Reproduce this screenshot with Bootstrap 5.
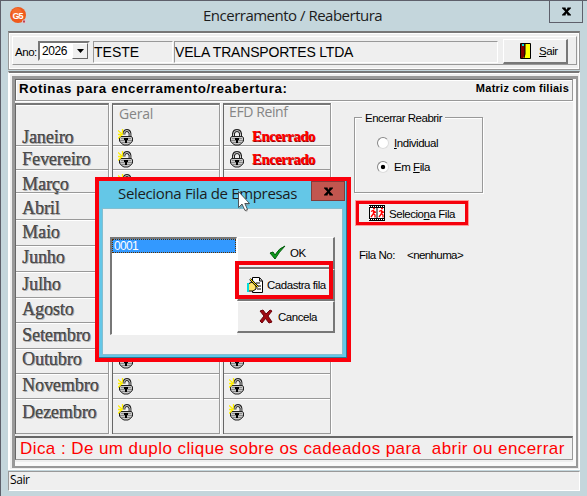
<!DOCTYPE html>
<html lang="pt-BR">
<head>
<meta charset="utf-8">
<title>Encerramento / Reabertura</title>
<link href="https://cdn.jsdelivr.net/npm/bootstrap@5.3.0/dist/css/bootstrap.min.css" rel="stylesheet">
<style>
body{width:587px;height:496px;overflow:hidden;font:12px/14px "Liberation Sans",Arial,sans-serif;color:#000;background:#c4d6dc}
.win{width:587px;height:496px;border-top:1px solid #5e606b;border-left:1px solid #5e606b;padding:0 7px}
.titlebar{height:30px;font:15px/29px "Open Sans","Noto Sans",sans-serif;color:#1c1c1c}
.logo{width:17px;height:17px;margin:6px 0 0 2px}
.title-text{width:180px;margin-left:176px;white-space:nowrap;letter-spacing:-.5px}
.win-close{width:34px;height:22px;border:1px solid #5e606b;border-top:0;margin-right:-3px}
.main-w{width:572px}
.tools{height:39px;border:1px solid #999;border-top:2px solid #777;box-shadow:inset 1px 1px #fff,inset -1px -1px #fff;background:#efefef;padding:3px 2px 2px 3px}
.tools-in{height:29px;border:1px solid #fff;border-right-color:#999;border-bottom-color:#999;padding-top:4px}
.sunk{border:1px solid #999;border-right-color:#fff;border-bottom-color:#fff}
.ano{margin:4px 3px 0 2px;width:20px}
.year{width:52px;height:20px;border:2px solid #777;border-color:#777 #eee #eee #777;background:#fff;font-size:12px;line-height:17px;padding-left:2px;letter-spacing:-.4px}
.year-arrow{width:16px;height:16px;background:#efefef;border:1px solid #fff;border-right:1px solid #666;border-bottom:1px solid #666}
.fld{height:22px;font-size:14px;line-height:21px;white-space:nowrap;letter-spacing:-.18px}
.f1{width:80px;margin-left:3px;letter-spacing:0}
.f2{width:324px;margin-left:1px}
.pushbtn{background:#efefef;border:1px solid #fff;border-right:2px solid #777;border-bottom:2px solid #777}
.sair{width:65px;height:25px;margin:-2px 0 0 5px}
.sheet{height:399px;margin-top:1px;background:#efefef;border:1px solid #fff;border-top:2px solid #777;box-shadow:inset 1px 1px #fff;padding:3px}
.sheet-in{height:392px;border:3px solid #999;border-right-width:2px;border-bottom-width:2px;padding:0 3px 0 0;margin-right:-2px;box-shadow:inset -3px -4px #fafafa}
.head{height:22px;border:1px solid #666;border-right-color:#999;border-bottom-color:#999;font-weight:700;padding:0 3px;box-shadow:inset 1px 1px #fff}
.head-l{font-size:13.3px;letter-spacing:.61px;line-height:17px}
.head-r{font-size:11px;letter-spacing:.25px;line-height:17px}
.work{height:335px;border-top:1px solid #fff;padding-top:1px}
.mcol{width:94px;height:331px;margin-right:3px;border:1px solid #666;border-top:2px solid #777;border-right-color:#999;border-bottom:0;box-shadow:1px 0 #fff}
.gcol{width:108px}
.cell{border-bottom:1px solid #999;border-top:1px solid #fff}
.c1{height:41px}.c2{height:24px}.c3{height:23px}.c4{height:27px}.c5,.c6,.c7{height:26px}.c8,.c9,.c11,.c10{height:25px}.c9{height:26px}.c12{height:35px}
.mth{font:18.1px/18px "Liberation Serif",serif;color:#4c4c4c;text-shadow:1px 1px 0 #aaa,.5px 0 0 #222;padding-left:6px;letter-spacing:-.1px}
.c1.mth{padding-top:22px}.c2.mth{padding-top:3px}.c3.mth{padding-top:4px}.c4.mth{padding-top:5px}.c5.mth,.c9.mth{padding-top:2px}.c6.mth,.c8.mth{padding-top:1px}.c7.mth{padding-top:2px}.c10.mth{padding-top:0}.c11.mth{padding-top:1px}.c12.mth{padding-top:3px}
.lk{width:16px;height:17px;display:block;margin-left:5px;margin-top:3px;flex:none}
.c12 .lk{margin-top:4px}
.c2 .lk{margin-top:4px}
.c10 .lk{margin-top:2px}
.colname{font:14px/15px "Open Sans","Noto Sans",sans-serif;color:#858585;height:20px;padding-left:6px;white-space:nowrap;letter-spacing:-.2px}
.efd{letter-spacing:-.4px;padding-left:5px;line-height:12px}
.enc{font:bold 15px/16px "Liberation Serif",serif;letter-spacing:-.6px;color:#f00;text-shadow:.6px .6px 0 #a00000;margin:2px 0 0 7px}
.c2 .enc{margin-top:4px}
.side{padding:14px 0 0 20px;width:225px}
.group{width:129px;height:76px;border:1px solid #999;box-shadow:1px 1px #fff,inset 1px 1px #fff}
.group-name{position:relative;top:-7px;background:#efefef;display:inline-block;margin:0 0 0 7px;padding:0 3px;letter-spacing:-.5px;font-size:11.5px;white-space:nowrap;height:15px}
.radio{width:12px;height:12px;border-radius:50%;border:1px solid #888;border-right-color:#ddd;border-bottom-color:#ddd;background:#fff;margin-right:5px}
.radio.on{background:radial-gradient(circle,#000 0 1.8px,#fff 2.6px)}
.opt1{margin:3px 0 0 22px}.opt2{margin:10px 0 0 22px}
.small-t{font-size:11.5px;letter-spacing:-.45px;white-space:nowrap}
.selbtn{width:114px;height:26px;border:4px solid #f5000b;outline:1px solid #ff9a9a;outline-offset:-1px;margin:7px 0 0 1px;padding-left:10px}
.seltxt{margin-left:4px;padding-top:2px}.fila{margin:22px 0 0 5px}.nenhuma{margin-left:12px;letter-spacing:-.6px}
.tip{height:24px;border:1px solid #999;border-top:2px solid #666;border-left-color:#666;font-size:17px;line-height:22px;color:#f00;white-space:pre;padding-left:4px;letter-spacing:.43px}
.status{height:20px;margin-top:1px;background:#efefef;border:1px solid #fff;border-top-color:#999;border-left-color:#999;font:12px/15px "Open Sans","Noto Sans",sans-serif;padding-left:1px;letter-spacing:-.4px}
.dlg{position:absolute;left:95px;top:177px;width:256px;height:185px;border:4px solid #fb000c;background:#64c7e7;box-shadow:inset -1px -1px #2c7890}
.dlg-title{height:27px;font:15px/25px "Open Sans","Noto Sans",sans-serif;letter-spacing:-.34px;padding-left:19px;white-space:nowrap;color:#1c1c1c}
.dlg-close{width:34px;height:20px;background:#c2564f;border:1px solid #803c3c;margin-right:2px}
.dlg-body{width:241px;height:147px;margin-left:3px;background:#efefef;padding:28px 0 0 7px;border:1px solid #83bfd1}
.list{width:127px;height:98px;border:2px solid #777;border-right:1px solid #fff;border-bottom:1px solid #fff;background:#fff}
.list-item{height:14px;background:#3399ff;color:#fff;border:1px dotted #593000;line-height:12px;padding-left:1px;font-size:12px;letter-spacing:-.7px}
.dbtn{width:98px;height:32px}
.d1{margin:0 4px 0 31px}.d2{margin:0 3px 0 9px}.d3{margin:0 5px 0 21px}
.ring{position:absolute;left:235px;top:261px;width:98px;height:38px;border:4px solid #f5000b}
.cursor{position:absolute;left:237px;top:190px}
</style>
</head>
<body>
<svg width="0" height="0" class="position-absolute">
<symbol id="lock" viewBox="0 0 16 17"><path d="M4.500 8V4.500Q5 1.500 8 1.500T11.500 4.500V8" fill="none" stroke="#222" stroke-width="3"/><path d="M4.500 8V4.500Q5 1.500 8 1.500T11.500 4.500V8" fill="none" stroke="#ccc"/><path d="M2.500 7.500H13.500L14.500 9V12L12.500 14.500L10 16H6L3.500 14.500L1.500 12V9Z" fill="#c8c8c8" stroke="#222"/><path d="M3 9.500H13M2 11.500H14M3 13.500H13" stroke="#888"/><path d="M6 9H10V11H9V14H7V11H6Z" fill="#000"/></symbol>
<symbol id="open" viewBox="0 0 16 17"><path d="M6 5.500V4Q6.500 1.500 9 1.500T12 4.500V8" fill="none" stroke="#222" stroke-width="2.800"/><path d="M6 5.500V4Q6.500 1.500 9 1.500T12 4.500V8" fill="none" stroke="#ccc"/><path d="M2.500 7.500H13.500L14.500 9V12L12.500 14.500L10 16H6L3.500 14.500L1.500 12V9Z" fill="#c8c8c8" stroke="#222"/><path d="M3 9.500H13M2 11.500H14M3 13.500H13" stroke="#888"/><path d="M6 9H10V11H9V14H7V11H6Z" fill="#000"/><path d="M0 1.500L5 6M4.500 0V4M0 5.500H5M0 9.500L3.500 6" stroke="#ffef00" stroke-width="1.300"/></symbol>
<symbol id="ex" viewBox="0 0 10 9"><path d="M0 0H4V1L5 2.500L6 1V0H10V1L6.500 4.500L10 8V9H6V8L5 6.500L4 8V9H0V8L3.500 4.500L0 1Z" fill="#000"/></symbol>
</svg>
<div class="win">
 <div class="titlebar d-flex">
  <svg class="logo" viewBox="0 0 17 17"><circle cx="8" cy="8" r="8" fill="#ef5a1c"/><circle cx="7" cy="6" r="5" fill="#f77a3c" opacity=".6"/><text x="2.500" y="11.500" font-family="Liberation Sans" font-weight="700" font-size="9" textLength="11" fill="#fff">G5</text><circle cx="14" cy="14.500" r="2" fill="#e3c6cf"/><rect x="13" y="13.500" width="2" height="2" fill="#b45"/></svg>
  <div class="title-text">Encerramento / Reabertura</div>
  <div class="win-close ms-auto d-flex align-items-center justify-content-center"><svg width="9" height="9"><use href="#ex"/></svg></div>
 </div>
 <div class="main-w">
  <div class="tools"><div class="tools-in d-flex">
   <span class="small-t ano">Ano:</span>
   <div class="year d-flex justify-content-between"><span>2026</span><span class="year-arrow d-flex align-items-center justify-content-center"><svg width="7" height="4"><path d="M0 0H7L3.500 4Z"/></svg></span></div>
   <div class="fld sunk f1">TESTE</div><div class="fld sunk f2">VELA TRANSPORTES LTDA</div>
   <div class="pushbtn sair d-flex align-items-center"><svg width="11" height="16" class="ms-3"><path d="M.5.500H10.500V15.500H.5Z" fill="#ff0" stroke="#000"/><path d="M1 1H5V12L3 15H1Z" fill="#800000"/><path d="M2 1H4V3H2Z" fill="#0dd"/><path d="M5 1V11L4 15" fill="none" stroke="#000"/></svg><span class="small-t ms-1 ps-1"><u>S</u>air</span></div>
  </div></div>
  <div class="sheet"><div class="sheet-in">
   <div class="head d-flex justify-content-between"><span class="head-l">Rotinas para encerramento/reabertura:</span><span class="head-r">Matriz com filiais</span></div>
   <div class="work d-flex">
    <div class="mcol">
     <div class="cell mth c1">Janeiro</div><div class="cell mth c2">Fevereiro</div><div class="cell mth c3">Março</div><div class="cell mth c4">Abril</div><div class="cell mth c5">Maio</div><div class="cell mth c6">Junho</div><div class="cell mth c7">Julho</div><div class="cell mth c8">Agosto</div><div class="cell mth c9">Setembro</div><div class="cell mth c10">Outubro</div><div class="cell mth c11">Novembro</div><div class="cell mth c12">Dezembro</div>
    </div>
    <div class="mcol gcol">
     <div class="cell c1"><div class="colname">Geral</div><svg class="lk"><use href="#open"/></svg></div>
     <div class="cell c2"><svg class="lk"><use href="#open"/></svg></div>
     <div class="cell c3"><svg class="lk"><use href="#open"/></svg></div>
     <div class="cell c4"></div><div class="cell c5"></div><div class="cell c6"></div><div class="cell c7"></div><div class="cell c8"></div><div class="cell c9"></div>
     <div class="cell c10"><svg class="lk"><use href="#open"/></svg></div>
     <div class="cell c11"><svg class="lk"><use href="#open"/></svg></div>
     <div class="cell c12"><svg class="lk"><use href="#open"/></svg></div>
    </div>
    <div class="mcol gcol">
     <div class="cell c1"><div class="colname efd">EFD Reinf</div><div class="d-flex"><svg class="lk"><use href="#lock"/></svg><span class="enc">Encerrado</span></div></div>
     <div class="cell c2 d-flex"><svg class="lk"><use href="#lock"/></svg><span class="enc">Encerrado</span></div>
     <div class="cell c3"></div><div class="cell c4"></div><div class="cell c5"></div><div class="cell c6"></div><div class="cell c7"></div><div class="cell c8"></div><div class="cell c9"></div>
     <div class="cell c10"><svg class="lk"><use href="#open"/></svg></div>
     <div class="cell c11"><svg class="lk"><use href="#open"/></svg></div>
     <div class="cell c12"><svg class="lk"><use href="#open"/></svg></div>
    </div>
    <div class="side">
     <div class="group"><div class="group-name">Encerrar Reabrir</div>
      <div class="d-flex align-items-center opt1"><span class="radio"></span><span class="small-t"><u>I</u>ndividual</span></div>
      <div class="d-flex align-items-center opt2"><span class="radio on"></span><span class="small-t">Em <u>F</u>ila</span></div>
     </div>
     <div class="selbtn d-flex align-items-center"><svg width="16" height="16"><path d="M0 0H16V16H0Z"/><path d="M1 3H7.500V13H1ZM8.500 3H15V13H8.500Z" fill="#fff"/><path d="M0 1.500H16M0 14.500H16" stroke="#fff" stroke-dasharray="1 1"/><path id="run" d="M4 3.500h2M4.500 5v4M2 6.500l2-1l3 2M4.500 8.500L2 12M4.500 8.500L6 10V12.500" stroke="#f00" stroke-width="1.300" fill="none"/><use href="#run" x="8"/></svg><span class="small-t seltxt">Selecio<u>n</u>a Fila</span></div>
     <div class="fila small-t"><span>Fila No:</span><span class="nenhuma">&lt;nenhuma&gt;</span></div>
    </div>
   </div>
   <div class="tip">Dica : De um duplo clique sobre os cadeados para  abrir ou encerrar</div>
  </div></div>
  <div class="status">Sair</div>
 </div>
</div>
<div class="dlg">
 <div class="dlg-title d-flex justify-content-between"><span>Seleciona Fila de Empresas</span><span class="dlg-close d-flex align-items-center justify-content-center"><svg width="9" height="9"><use href="#ex"/></svg></span></div>
 <div class="dlg-body d-flex">
  <div class="list"><div class="list-item">0001</div></div>
  <div>
   <div class="pushbtn dbtn d-flex align-items-center"><svg width="17" height="15" class="d1"><path d="M1 8L4 7L6 10Q10 3 16 1Q10 7 6 14Z" fill="#0a9c1a" stroke="#045a0c"/></svg><span class="small-t">OK</span></div>
   <div class="pushbtn dbtn d-flex align-items-center"><svg width="17" height="16" class="d2"><path d="M5.500.500H12.500L15.500 4V15.500H5.500Z" fill="#fff" stroke="#000"/><path d="M12.500 1V4H15M9 6H13M10 9H14M10 12H14" fill="none" stroke="#000"/><path d="M1 7L5 5L9 7V12L6 14H1Z" fill="#ffe36b" stroke="#000"/><path d="M0 6H2V15H0Z" fill="#0dd"/><path d="M3 2L11 10" stroke="#000" stroke-width="2"/><path d="M3 2L11 10" stroke="#ffe000"/></svg><span class="small-t">Cadastra fila</span></div>
   <div class="pushbtn dbtn d-flex align-items-center"><svg width="14" height="15" class="d3"><path d="M1 2L4 1L7 5L11 1L13 2L9 7L13 13L10 14L6.500 9.500L3 14L1 12L5 7Z" fill="#a00a12" stroke="#6b0008"/></svg><span class="small-t">Cancela</span></div>
  </div>
 </div>
</div>
<div class="ring"></div>
<svg class="cursor" width="14" height="24"><path d="M2.500 3.500V19.500L6 16L9 22L11 21L8.500 15.500H13Z" fill="#888" opacity=".5"/><path d="M1.500 1.500V17.500L5 14L8 20.500L10.500 19.500L7.800 13.500H12.500Z" fill="#fff" stroke="#333" stroke-width=".8"/></svg>
<script src="https://cdn.jsdelivr.net/npm/bootstrap@5.3.0/dist/js/bootstrap.bundle.min.js"></script>
</body>
</html>
